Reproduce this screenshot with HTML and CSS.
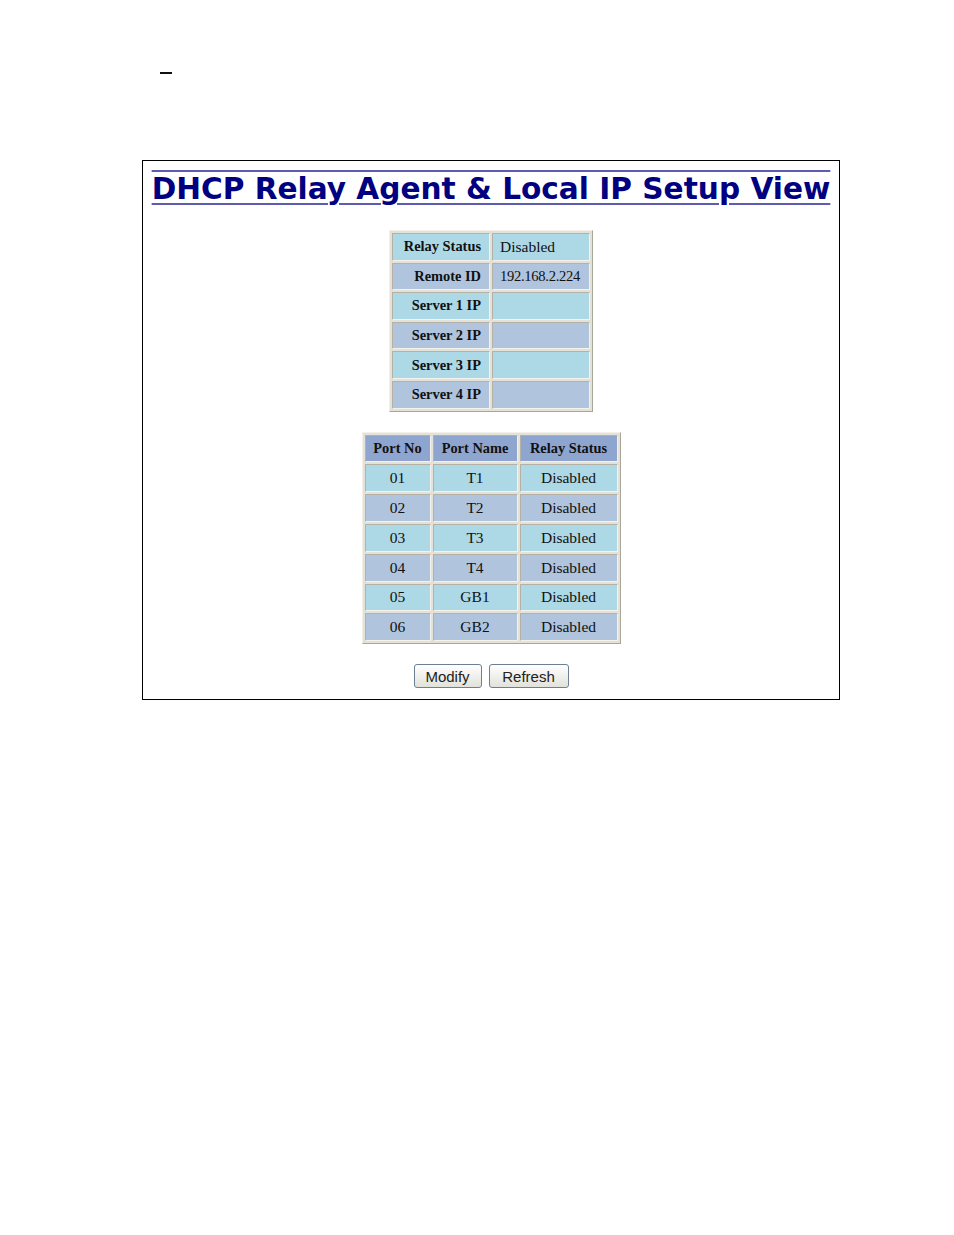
FILE: index.html
```html
<!DOCTYPE html>
<html>
<head>
<meta charset="utf-8">
<link rel="stylesheet" href="styles.css">
</head>
<body>
<div class="dash"></div>
<div class="panel">
  <h1 class="title"><span>DHCP Relay Agent &amp; Local IP Setup View</span></h1>
  <table class="grid info">
    <tr class="odd"><th>Relay Status</th><td>Disabled</td></tr>
    <tr class="even"><th>Remote ID</th><td class="ip">192.168.2.224</td></tr>
    <tr class="odd"><th>Server 1 IP</th><td></td></tr>
    <tr class="even"><th>Server 2 IP</th><td></td></tr>
    <tr class="odd"><th>Server 3 IP</th><td></td></tr>
    <tr class="even"><th>Server 4 IP</th><td></td></tr>
  </table>
  <table class="grid ports">
    <tr class="head"><th class="c1">Port No</th><th class="c2">Port Name</th><th class="c3">Relay Status</th></tr>
    <tr class="odd"><td>01</td><td>T1</td><td>Disabled</td></tr>
    <tr class="even"><td>02</td><td>T2</td><td>Disabled</td></tr>
    <tr class="odd"><td>03</td><td>T3</td><td>Disabled</td></tr>
    <tr class="even"><td>04</td><td>T4</td><td>Disabled</td></tr>
    <tr class="odd"><td>05</td><td>GB1</td><td>Disabled</td></tr>
    <tr class="even"><td>06</td><td>GB2</td><td>Disabled</td></tr>
  </table>
  <div class="buttons">
    <button class="btn btn-modify">Modify</button>
    <button class="btn btn-refresh">Refresh</button>
  </div>
</div>
</body>
</html>
```
FILE: styles.css
```css
html, body {
  margin: 0;
  padding: 0;
  background: #ffffff;
}
body {
  font-family: "Liberation Serif", "Times New Roman", serif;
  color: #000;
}
.dash {
  margin: 72px 0 0 160px;
  width: 12px;
  height: 2px;
  background: #111;
}
.panel {
  box-sizing: border-box;
  margin: 86px 0 0 142px;
  width: 698px;
  border: 1px solid #000;
  padding: 8px 0 11px 0;
  display: flex;
  flex-direction: column;
  align-items: center;
}
.title {
  margin: 0;
  font-family: "DejaVu Sans", Verdana, sans-serif;
  font-weight: bold;
  font-size: 29.6px;
  line-height: 40px;
  color: #000080;
  white-space: nowrap;
}
.title span {
  text-decoration: underline overline;
  text-decoration-color: #5c5cb0;
  text-decoration-thickness: 2px;
  text-underline-offset: 4px;
}
.grid {
  box-sizing: border-box;
  border-collapse: separate;
  border-spacing: 2px;
  border: 1px solid;
  border-color: #f2f0e8 #a8a698 #a8a698 #f2f0e8;
  background: #e4e2d8;
  table-layout: fixed;
}
.grid th, .grid td {
  box-sizing: border-box;
  height: 27.6px;
  padding: 0 7px;
  border: 1px solid;
  border-color: #b4b2a6 #f4f2ec #f4f2ec #b4b2a6;
  color: #111;
  white-space: nowrap;
  font-size: 15.5px;
}
.grid th {
  font-weight: bold;
  font-size: 14.4px;
}
.info {
  margin-top: 21px;
  width: 204px;
}
.info th {
  width: 98px;
  text-align: right;
  padding-right: 8px;
}
.info td {
  width: 98px;
  text-align: left;
}
.info .ip {
  font-size: 14.6px;
  letter-spacing: -0.3px;
}
.ports {
  margin-top: 20px;
  width: 259px;
}
.ports th, .ports td {
  text-align: center;
  padding: 0 2px;
  height: 27.8px;
}
.ports .c1 { width: 66px; }
.ports .c2 { width: 85px; }
.ports .c3 { width: 98px; }
.odd th, .odd td { background: #add8e6; }
.even th, .even td { background: #b0c4de; }
.head th { background: #8ea5d0; }
.buttons {
  margin-top: 20px;
  display: flex;
  gap: 7px;
}
.btn {
  box-sizing: border-box;
  height: 24px;
  padding: 0;
  font-family: "Liberation Sans", Arial, sans-serif;
  font-size: 15px;
  color: #222;
  border: 1px solid #6e7f94;
  border-radius: 3px;
  background: linear-gradient(#ffffff, #f0f0ec 50%, #e2e2dc);
}
.btn-modify { width: 68px; }
.btn-refresh { width: 80px; }
```
